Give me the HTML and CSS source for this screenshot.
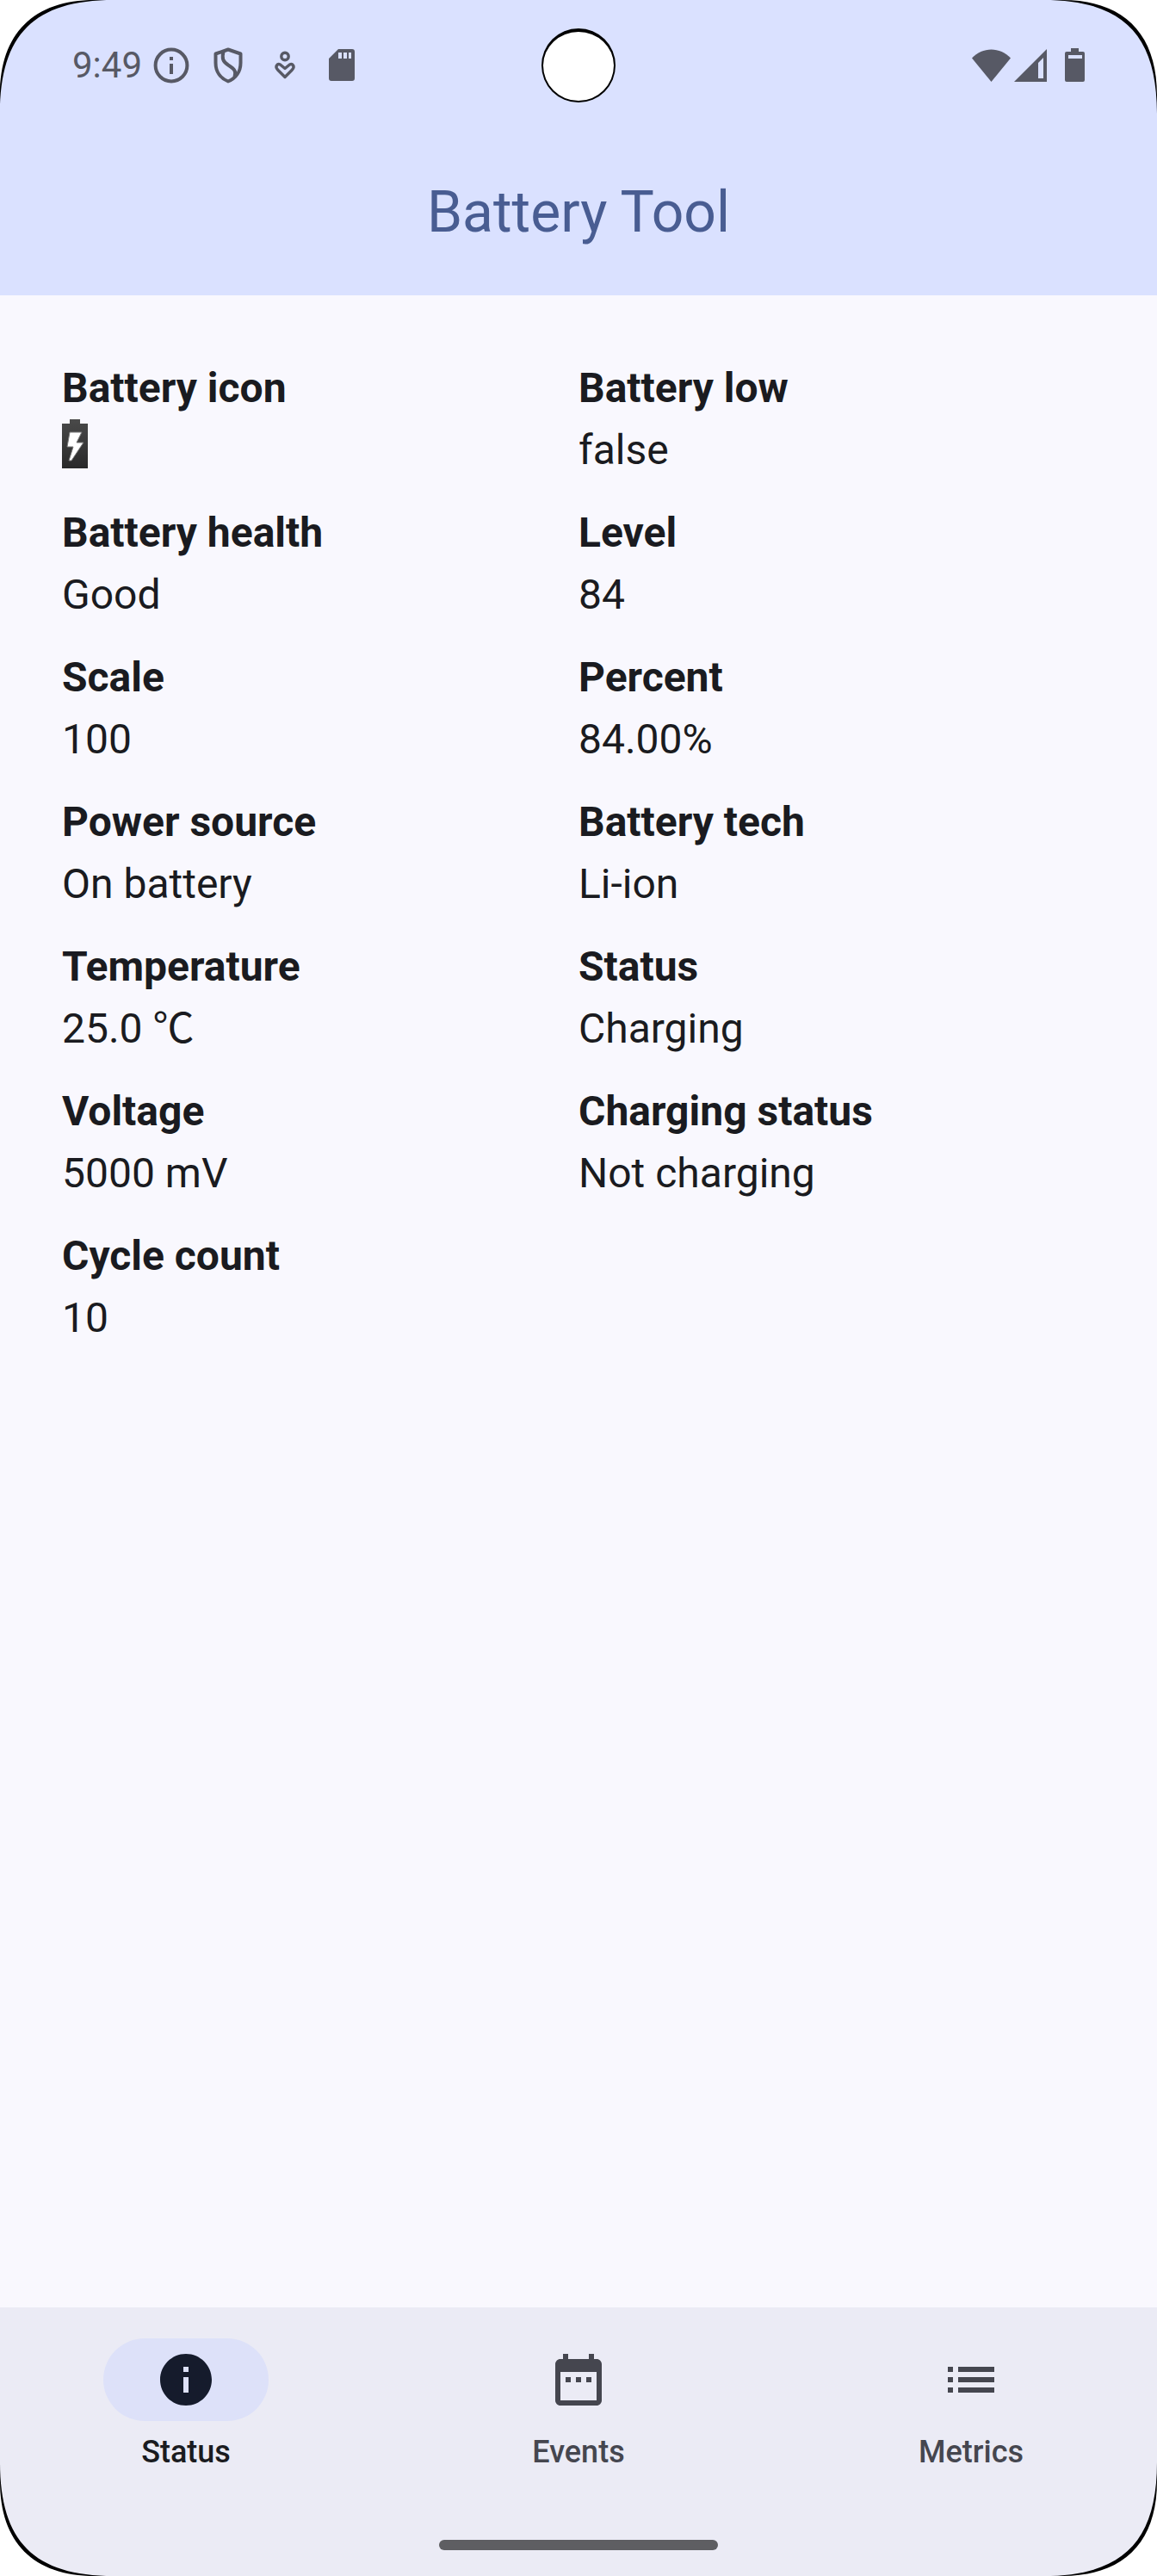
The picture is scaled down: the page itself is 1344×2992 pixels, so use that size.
FILE: index.html
```html
<!DOCTYPE html>
<html lang="en">
<head>
<meta charset="utf-8">
<meta name="viewport" content="width=device-width, initial-scale=1">
<title>Battery Tool</title>
<link rel="stylesheet" href="styles.css">
</head>
<body>
<div class="screen">
  <header class="header">
    <div class="status-bar">
      <div class="status-left">
        <time class="clock">9:49</time>
        <div class="notifications">
          <svg class="status-icon" viewBox="0 0 48 48" aria-hidden="true"><circle cx="24" cy="24" r="18.400" fill="none" stroke="currentColor" stroke-width="4"/><path d="M22 14h4v4h-4zM22 22h4v12h-4z" fill="currentColor"/></svg>
          <svg class="status-icon" viewBox="0 0 48 48" aria-hidden="true"><g fill="none" stroke="currentColor" stroke-width="4" stroke-linejoin="round"><path d="M24 5.500L38.500 10.500V21C38.500 31 33 39 24 42.500C15 39 9.500 31 9.500 21V10.500Z"/><path d="M18.500 8C16.500 16 18 19.500 24 23.500C32 28.500 33.500 31 31.500 37.500"/></g></svg>
          <svg class="status-icon" viewBox="0 0 48 48" aria-hidden="true"><g fill="none" stroke="currentColor" stroke-width="3.400"><circle cx="24" cy="13.500" r="4.200"/><path d="M24 37.500L16 29.500C11.500 25 15.500 21.500 18.500 23L24 27.500L29.500 23C32.500 21.500 36.500 25 32 29.500Z" stroke-linejoin="round"/></g></svg>
          <svg class="status-icon" viewBox="0 0 48 48" aria-hidden="true"><path d="M20 5H36a3 3 0 0 1 3 3V39a3 3 0 0 1-3 3H12a3 3 0 0 1-3-3V16ZM20 9v7h4V9ZM26 9v7h4V9ZM32 9v7h3V9Z" fill="currentColor" fill-rule="evenodd"/></svg>
        </div>
      </div>
      <div class="camera"></div>
      <div class="status-right">
        <svg class="wifi" viewBox="0 0 45 38" aria-hidden="true"><path d="M22.500 38L0 10.500C12-3 33-3 45 10.500Z" fill="currentColor"/></svg>
        <svg class="signal" viewBox="0 0 38 38" aria-hidden="true"><path d="M38 0V38H0ZM34 10L28 16V34H34Z" fill="currentColor" fill-rule="evenodd"/></svg>
        <svg class="battery" viewBox="0 0 23 39" aria-hidden="true"><path d="M7 0h9v4h5a2 2 0 0 1 2 2v31a2 2 0 0 1-2 2H2a2 2 0 0 1-2-2V6a2 2 0 0 1 2-2h5ZM4 8v4h16V8Z" fill="currentColor" fill-rule="evenodd"/></svg>
      </div>
    </div>
    <h1 class="title">Battery Tool</h1>
  </header>

  <main class="content">
    <dl class="facts">
      <div class="fact"><dt>Battery icon</dt><dd>
        <svg class="charge-icon" viewBox="0 0 30 60" role="img" aria-label="Charging">
          <defs><linearGradient id="shell" x1="0" y1="0" x2="0" y2="1"><stop offset="0" stop-color="#4a4a4a"/><stop offset="1" stop-color="#292929"/></linearGradient></defs>
          <path d="M9 0H21V5H30V57H0V5H9Z" fill="url(#shell)"/>
          <path d="M9 15H23L17 27H25L11 48H8L13 32H6Z" fill="#fff" stroke="#777" stroke-width="1" stroke-linejoin="round"/>
        </svg></dd></div>
      <div class="fact"><dt>Battery low</dt><dd>false</dd></div>
      <div class="fact"><dt>Battery health</dt><dd>Good</dd></div>
      <div class="fact"><dt>Level</dt><dd>84</dd></div>
      <div class="fact"><dt>Scale</dt><dd>100</dd></div>
      <div class="fact"><dt>Percent</dt><dd>84.00%</dd></div>
      <div class="fact"><dt>Power source</dt><dd>On battery</dd></div>
      <div class="fact"><dt>Battery tech</dt><dd>Li-ion</dd></div>
      <div class="fact"><dt>Temperature</dt><dd>25.0 ℃</dd></div>
      <div class="fact"><dt>Status</dt><dd>Charging</dd></div>
      <div class="fact"><dt>Voltage</dt><dd>5000 mV</dd></div>
      <div class="fact"><dt>Charging status</dt><dd>Not charging</dd></div>
      <div class="fact"><dt>Cycle count</dt><dd>10</dd></div>
    </dl>
  </main>

  <footer class="bottom">
    <nav class="tabs" aria-label="Main">
      <a class="tab tab-active" href="#status" aria-current="page">
        <span class="pill"><svg class="tab-icon" viewBox="0 0 24 24" aria-hidden="true"><path d="M12 2C6.480 2 2 6.480 2 12s4.480 10 10 10 10-4.480 10-10S17.520 2 12 2zm1 15h-2v-6h2v6zm0-8h-2V7h2v2z" fill="currentColor"/></svg></span>
        <span class="tab-label">Status</span>
      </a>
      <a class="tab" href="#events">
        <span class="pill"><svg class="tab-icon" viewBox="0 0 24 24" aria-hidden="true"><path d="M9 11H7v2h2v-2zm4 0h-2v2h2v-2zm4 0h-2v2h2v-2zm2-7h-1V2h-2v2H8V2H6v2H5c-1.110 0-1.990.9-1.990 2L3 20c0 1.100.89 2 2 2h14c1.100 0 2-.9 2-2V6c0-1.100-.9-2-2-2zm0 16H5V9h14v11z" fill="currentColor"/></svg></span>
        <span class="tab-label">Events</span>
      </a>
      <a class="tab" href="#metrics">
        <span class="pill"><svg class="tab-icon" viewBox="0 0 24 24" aria-hidden="true"><path d="M3 13h2v-2H3v2zm0 4h2v-2H3v2zm0-8h2V7H3v2zm4 4h14v-2H7v2zm0 4h14v-2H7v2zM7 7v2h14V7H7z" fill="currentColor"/></svg></span>
        <span class="tab-label">Metrics</span>
      </a>
    </nav>
    <div class="home-handle"></div>
  </footer>

  <svg class="corner corner-tl" viewBox="0 0 132 132" aria-hidden="true"><use href="#corner"/></svg>
  <svg class="corner corner-tr" viewBox="0 0 132 132" aria-hidden="true"><use href="#corner"/></svg>
  <svg class="corner corner-bl" viewBox="0 0 132 132" aria-hidden="true"><use href="#corner"/></svg>
  <svg class="corner corner-br" viewBox="0 0 132 132" aria-hidden="true">
    <defs><g id="corner"><path d="M0 0H132C40 0 0 40 0 132Z" fill="#000"/><path d="M0 0H110C39 0 0 39 0 110Z" fill="#fff"/></g></defs>
    <use href="#corner"/>
  </svg>
</div>
</body>
</html>
```

FILE: styles.css
```css
* {
  box-sizing: border-box;
}

body {
  margin: 0;
  background: #fff;
  color: #1a1b20;
  font-family: Roboto, "Noto Sans CJK SC", sans-serif;
}

.screen {
  position: relative;
  display: flex;
  flex-direction: column;
  min-height: 100vh;
  background: #f9f8fe;
}

/* Status bar and title */
.header {
  background: #dae1ff;
}

.status-bar {
  display: grid;
  grid-template-columns: 1fr auto 1fr;
  align-items: center;
  height: 151px;
  padding: 0 84px;
  color: #575965;
}

.status-left,
.status-right,
.notifications {
  display: flex;
  align-items: center;
}

.status-left {
  gap: 10px;
}

.notifications {
  gap: 18px;
}

.clock {
  font-size: 42px;
  line-height: 48px;
}

.status-icon {
  width: 48px;
  height: 48px;
}

.camera {
  width: 86px;
  height: 86px;
  border: 2px solid #000;
  border-top-width: 4px;
  border-radius: 50%;
  background: #fff;
}

.status-right {
  justify-content: flex-end;
  gap: 4px;
}

.wifi {
  width: 45px;
  height: 38px;
}

.signal {
  width: 38px;
  height: 38px;
}

.battery {
  width: 23px;
  height: 39px;
  margin-left: 17px;
}

.title {
  margin: 0;
  padding: 54px 48px;
  color: #495d92;
  font-size: 66px;
  font-weight: 400;
  line-height: 84px;
  text-align: center;
}

/* Battery readings */
.content {
  flex: 1;
  padding: 72px;
}

.facts {
  display: grid;
  grid-template-columns: 1fr 1fr;
  row-gap: 24px;
  margin: 0;
  font-size: 48px;
  line-height: 72px;
}

.fact {
  min-height: 144px;
}

.fact dt {
  font-weight: 700;
}

.fact dd {
  margin: 0;
}

.charge-icon {
  display: block;
  width: 30px;
  height: 60px;
}

/* Bottom navigation */
.bottom {
  display: flex;
  flex-direction: column;
  align-items: center;
  padding: 36px 0 30px;
  background: #ebebf5;
}

.tabs {
  display: flex;
  gap: 24px;
  width: 100%;
}

.tab {
  display: flex;
  flex: 1;
  flex-direction: column;
  align-items: center;
  gap: 12px;
  color: #45464f;
  text-decoration: none;
}

.pill {
  display: flex;
  align-items: center;
  justify-content: center;
  width: 192px;
  height: 96px;
  border-radius: 48px;
}

.tab-icon {
  width: 72px;
  height: 72px;
}

.tab-label {
  font-size: 36px;
  font-weight: 500;
  line-height: 48px;
}

.tab-active {
  color: #1a1b20;
}

.tab-active .pill {
  background: #dde1f9;
  color: #151b2c;
}

.home-handle {
  width: 324px;
  height: 12px;
  margin-top: 78px;
  border-radius: 6px;
  background: #5e5e62;
}

/* Rounded display corners */
.corner {
  position: absolute;
  width: 132px;
  height: 132px;
}

.corner-tl {
  top: 0;
  left: 0;
}

.corner-tr {
  top: 0;
  right: 0;
  transform: rotate(90deg);
}

.corner-bl {
  bottom: 0;
  left: 0;
  transform: rotate(270deg);
}

.corner-br {
  right: 0;
  bottom: 0;
  transform: rotate(180deg);
}
```
